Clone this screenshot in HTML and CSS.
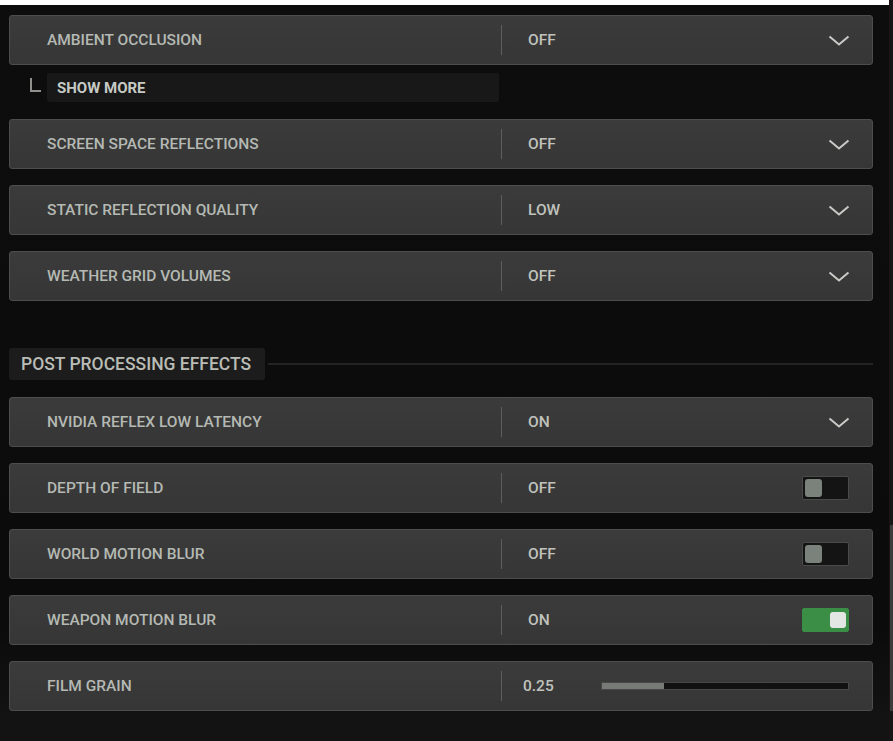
FILE: index.html
```html
<!DOCTYPE html>
<html>
<head>
<meta charset="utf-8">
<link rel="stylesheet" href="styles.css">
</head>
<body>
<div class="page">
  <div class="main">
    <div class="strip"></div>
    <div class="list">
      <div class="row">
        <div class="label">AMBIENT OCCLUSION</div>
        <div class="divider"></div>
        <div class="value"><span>OFF</span><svg class="chev" width="22" height="11" viewBox="0 0 22 11"><polyline points="1.5,1.5 11,9.5 20.5,1.5" fill="none" stroke="#c9cbc7" stroke-width="2"/></svg></div>
      </div>
      <div class="more">
        <div class="elbow"></div>
        <div class="more-box">SHOW MORE</div>
      </div>
      <div class="row after-more">
        <div class="label">SCREEN SPACE REFLECTIONS</div>
        <div class="divider"></div>
        <div class="value"><span>OFF</span><svg class="chev" width="22" height="11" viewBox="0 0 22 11"><polyline points="1.5,1.5 11,9.5 20.5,1.5" fill="none" stroke="#c9cbc7" stroke-width="2"/></svg></div>
      </div>
      <div class="row">
        <div class="label">STATIC REFLECTION QUALITY</div>
        <div class="divider"></div>
        <div class="value"><span>LOW</span><svg class="chev" width="22" height="11" viewBox="0 0 22 11"><polyline points="1.5,1.5 11,9.5 20.5,1.5" fill="none" stroke="#c9cbc7" stroke-width="2"/></svg></div>
      </div>
      <div class="row">
        <div class="label">WEATHER GRID VOLUMES</div>
        <div class="divider"></div>
        <div class="value"><span>OFF</span><svg class="chev" width="22" height="11" viewBox="0 0 22 11"><polyline points="1.5,1.5 11,9.5 20.5,1.5" fill="none" stroke="#c9cbc7" stroke-width="2"/></svg></div>
      </div>
      <div class="section">
        <div class="section-title">POST PROCESSING EFFECTS</div>
        <div class="section-line"></div>
      </div>
      <div class="row after-section">
        <div class="label">NVIDIA REFLEX LOW LATENCY</div>
        <div class="divider"></div>
        <div class="value"><span>ON</span><svg class="chev" width="22" height="11" viewBox="0 0 22 11"><polyline points="1.5,1.5 11,9.5 20.5,1.5" fill="none" stroke="#c9cbc7" stroke-width="2"/></svg></div>
      </div>
      <div class="row">
        <div class="label">DEPTH OF FIELD</div>
        <div class="divider"></div>
        <div class="value"><span>OFF</span><div class="toggle"><div class="knob"></div></div></div>
      </div>
      <div class="row">
        <div class="label">WORLD MOTION BLUR</div>
        <div class="divider"></div>
        <div class="value"><span>OFF</span><div class="toggle"><div class="knob"></div></div></div>
      </div>
      <div class="row">
        <div class="label">WEAPON MOTION BLUR</div>
        <div class="divider"></div>
        <div class="value"><span>ON</span><div class="toggle on"><div class="knob"></div></div></div>
      </div>
      <div class="row">
        <div class="label">FILM GRAIN</div>
        <div class="divider"></div>
        <div class="value slider-value"><span>0.25</span><div class="slider"><div class="fill" style="width:25%"></div></div></div>
      </div>
    </div>
  </div>
  <div class="scroll"><div class="thumb"></div></div>
</div>
</body>
</html>
```
FILE: styles.css
```css
html, body {
  margin: 0;
  padding: 0;
  background: #0c0c0c;
}
body {
  font-family: Roboto, "Liberation Sans", sans-serif;
  font-weight: 500;
  width: 893px;
  height: 741px;
  overflow: hidden;
}
.page {
  display: grid;
  grid-template-columns: 889px 4px;
  height: 741px;
  background: linear-gradient(#0d0d0d, #0b0b0b 85%, #131313 97%);
}
.main {
  display: flex;
  flex-direction: column;
}
.strip {
  height: 5px;
  background: #ffffff;
}
.list {
  display: flex;
  flex-direction: column;
  padding: 10px 16px 0 9px;
  gap: 16px;
}
.row {
  height: 48px;
  border: 1px solid #4d4e4c;
  border-radius: 3px;
  background: linear-gradient(#3b3b3b, #363636);
  display: grid;
  grid-template-columns: 491px 1px 1fr;
  align-items: center;
  color: #b5b9b3;
  font-size: 15.5px;
}
.label {
  padding-left: 37px;
}
.divider {
  height: 30px;
  background: #5e5f5d;
}
.value {
  display: flex;
  align-items: center;
  justify-content: space-between;
  padding-left: 26px;
  padding-right: 23px;
  color: #c0c3bd;
}
.chev {
  display: block;
  margin-right: -1px;
}
.more {
  display: flex;
  align-items: flex-start;
  margin-top: -11px;
  height: 32px;
}
.elbow {
  margin-left: 21px;
  margin-top: 8px;
  width: 9px;
  height: 12px;
  border-left: 2px solid #8e918c;
  border-bottom: 2px solid #8e918c;
}
.more-box {
  margin-left: 6px;
  margin-top: 3px;
  width: 442px;
  height: 29px;
  padding-left: 10px;
  background: #181818;
  border-radius: 2px;
  color: #c6cac4;
  font-size: 15px;
  font-weight: 700;
  line-height: 30px;
}
.after-more {
  margin-top: 1px;
}
.section {
  display: flex;
  align-items: center;
  margin-top: 31px;
}
.section-title {
  height: 32px;
  line-height: 33px;
  padding: 0 12px;
  background: #1c1c1c;
  border-radius: 3px;
  color: #b9bdb6;
  font-size: 17.5px;
  width: 232px;
  white-space: nowrap;
}
.section-line {
  flex: 1;
  height: 2px;
  margin-left: 3px;
  background: #232323;
}
.after-section {
  margin-top: 1px;
}
.toggle {
  box-sizing: border-box;
  width: 47px;
  height: 24px;
  border: 1px solid #4a4b49;
  border-radius: 2px;
  background: #141414;
  display: flex;
  align-items: center;
  padding: 0 2px;
  margin-right: 0;
}
.toggle .knob {
  width: 17px;
  height: 18px;
  border-radius: 3px;
  background: #7b817b;
}
.toggle.on {
  background: #3b8e46;
  border-color: #3b8e46;
  justify-content: flex-end;
  padding: 0 2px;
}
.toggle.on .knob {
  width: 16px;
  height: 16px;
  background: #e4e6e3;
}
.slider-value {
  padding-left: 21px;
}
.slider {
  width: 246px;
  height: 6px;
  border: 1px solid #474747;
  background: #121212;
  display: flex;
}
.fill {
  height: 100%;
  background: #777a77;
}
.scroll {
  background: #161616;
  display: flex;
  flex-direction: column;
}
.thumb {
  margin-top: 525px;
  height: 186px;
  margin-left: 1px;
  background: #3c3c3c;
}
```
